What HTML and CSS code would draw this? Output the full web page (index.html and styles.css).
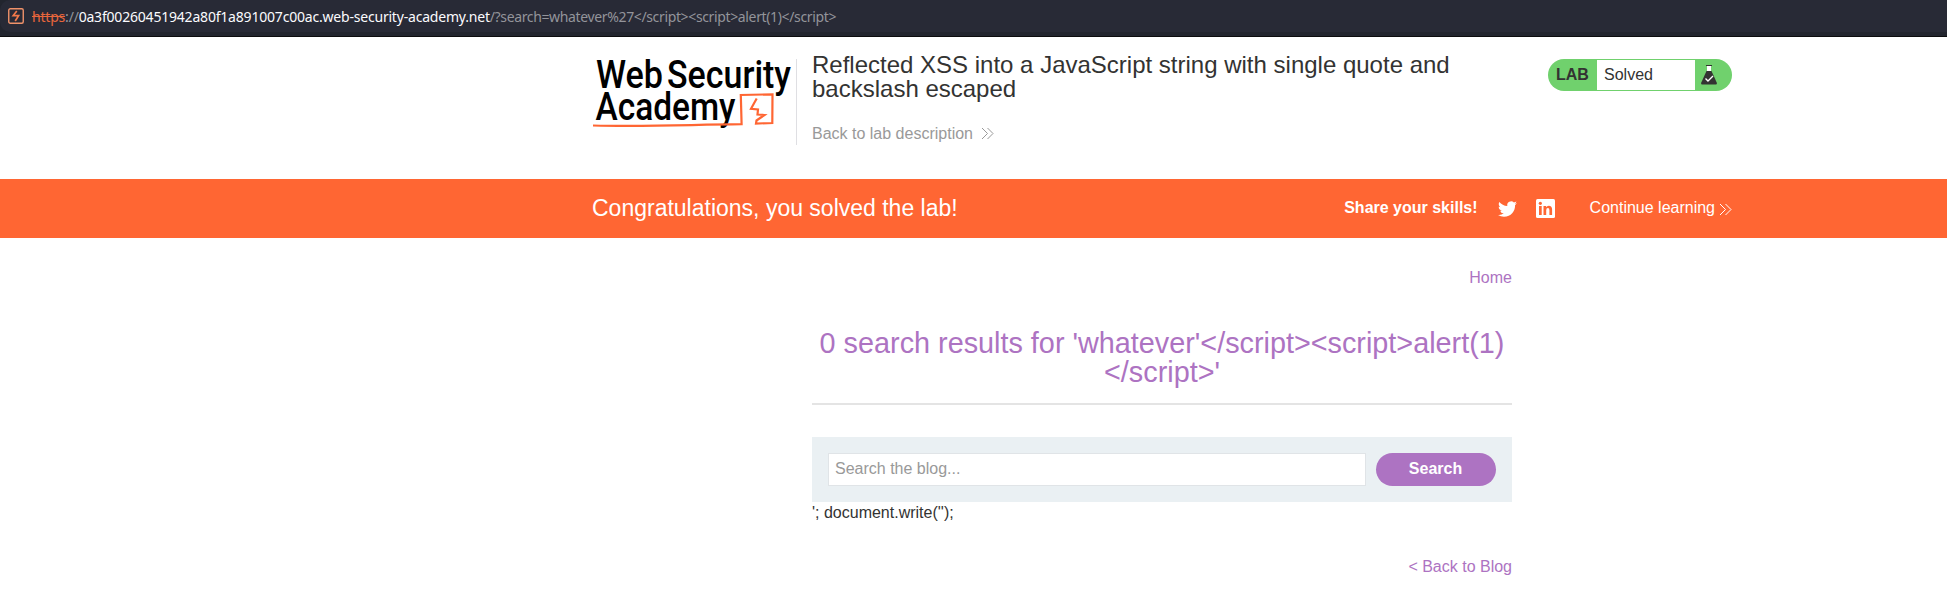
FILE: index.html
```html
<!DOCTYPE html>
<html lang="en">
<head>
<meta charset="utf-8">
<title>Reflected XSS into a JavaScript string</title>
<link rel="stylesheet" href="styles.css">
</head>
<body>
<div class="urlbar">
  <div class="urlfield">
    <svg class="urlicon" viewBox="0 0 16 16" width="16" height="16"><rect x=".75" y=".75" width="14.5" height="14.5" rx="1.5" fill="none" stroke="#f0926a" stroke-width="1.4"/><path d="M8.800 3 5.200 7.600h5.400L7.200 13" fill="none" stroke="#f0784a" stroke-width="1.700"/></svg>
    <span class="url"><span class="scheme">https</span><span class="dim">://</span><span class="host">0a3f00260451942a80f1a891007c00ac.web-security-academy.net</span><span class="dim query">/?search=whatever%27&lt;/script&gt;&lt;script&gt;alert(1)&lt;/script&gt;</span></span>
  </div>
</div>
<header class="header">
  <div class="container header-row">
    <div class="logo">
      <svg viewBox="0 0 204 86" width="204" height="86">
        <g class="logo-text">
          <text x="4" y="29" textLength="67" lengthAdjust="spacingAndGlyphs">Web</text>
          <text x="75" y="29" textLength="124" lengthAdjust="spacingAndGlyphs">Security</text>
          <text x="3.500" y="61" textLength="140" lengthAdjust="spacingAndGlyphs">Academy</text>
        </g>
        <path d="M1 66.500C50 68 90 66 149.600 65.200L148.800 36L180.500 35.300L180.300 64L164 64.500L164.500 61.500L172.500 56L165.500 55.500L166 50.500L159 49.800L164.700 39.500" fill="none" stroke="#ff6633" stroke-width="2.200"/>
      </svg>
    </div>
    <div class="title">
      <h2>Reflected XSS into a JavaScript string with single quote and backslash escaped</h2>
      <a class="lab-link">Back to lab description <svg class="chev" viewBox="0 0 13 13" width="13" height="13"><path d="M1 1 6.500 6.500 1 12M6.500 1 12 6.500 6.500 12"/></svg></a>
    </div>
    <div class="status">
      <span class="lab">LAB</span><span class="solved">Solved</span>
      <svg class="flask" viewBox="0 0 16 20" width="16" height="20"><path d="M5 .5h6" stroke="#333332" stroke-width="1"/><path d="M6 1h4v5H6z" fill="#fff"/><path d="M5.500 6h5l5.200 11.500q.8 2-1.400 2H1.700q-2.200 0-1.400-2z" fill="#333332"/><path d="m4.500 13.500 2.500 2.500 5-5" fill="none" stroke="#fff" stroke-width="1.400"/></svg>
    </div>
  </div>
</header>
<section class="banner">
  <div class="container banner-row">
    <h4>Congratulations, you solved the lab!</h4>
    <div class="share">
      <span class="skills">Share your skills!</span>
      <svg class="twitter" viewBox="0 0 24 24" width="19" height="20"><path fill="#fff" d="M23.950 4.570a10 10 0 0 1-2.820.77 4.960 4.960 0 0 0 2.160-2.720c-.95.55-2 .96-3.130 1.180a4.920 4.920 0 0 0-8.380 4.480C7.690 8.100 4.070 6.130 1.640 3.160a4.820 4.820 0 0 0-.67 2.480c0 1.710.87 3.210 2.190 4.100a4.900 4.900 0 0 1-2.230-.62v.06a4.920 4.920 0 0 0 3.950 4.830 5 5 0 0 1-2.210.08 4.940 4.940 0 0 0 4.600 3.420A9.870 9.870 0 0 1 0 19.540a13.990 13.990 0 0 0 7.550 2.210c9.050 0 14-7.500 14-13.980 0-.21 0-.42-.02-.63a9.940 9.940 0 0 0 2.420-2.570z"/></svg>
      <svg class="linkedin" viewBox="0 0 19 19" width="19" height="19"><rect width="19" height="19" rx="1.500" fill="#fff"/><g fill="#ff6633"><rect x="3" y="7" width="2.700" height="9"/><circle cx="4.350" cy="4.300" r="1.600"/><path d="M7.500 7h2.600v1.300q.9-1.500 2.700-1.500 3.300 0 3.300 3.800V16h-2.700v-4.700q0-2.200-1.500-2.200-1.700 0-1.700 2.200V16H7.500z"/></g></svg>
      <a class="continue">Continue learning <svg class="chev" viewBox="0 0 13 13" width="13" height="13"><path d="M1 1 6.500 6.500 1 12M6.500 1 12 6.500 6.500 12"/></svg></a>
    </div>
  </div>
</section>
<main class="content">
  <nav class="nav"><a>Home</a></nav>
  <h1>0 search results for 'whatever'&lt;/script&gt;&lt;script&gt;alert(1)<br>&lt;/script&gt;'</h1>
  <div class="rule"></div>
  <form class="search">
    <input type="text" placeholder="Search the blog...">
    <button type="button">Search</button>
  </form>
  <p class="leak">'; document.write('');</p>
  <div class="back"><a>&lt; Back to Blog</a></div>
</main>
</body>
</html>
```

FILE: styles.css
```css
* { box-sizing: border-box; }
body { margin: 0; background: #fff; color: #333332; font: 16px/18px "Liberation Sans", Arial, sans-serif; overflow: hidden; }
h1, h2, h4, p { margin: 0; font-weight: 400; }
svg { display: block; flex: none; overflow: visible; }
.urlbar { height: 37px; background: #22252e; border-bottom: 1px solid #0c0c0e; }
.urlfield { height: 32px; display: flex; align-items: center; padding-left: 8px; gap: 8px; background: #282a36; border-radius: 10px 0 0 10px; }
.url { font: 14px/20px "Noto Sans", sans-serif; letter-spacing: -0.2px; white-space: pre; padding-top: 1px; }
.scheme { color: #e8663c; text-decoration: line-through; }
.dim { color: #93949a; }
.query { letter-spacing: -0.36px; }
.host { color: #fbfbfe; }
.container { width: 1140px; margin-left: 592px; display: flex; }
.header { height: 142px; padding-top: 22px; }
.header-row { align-items: flex-start; }
.logo { width: 205px; height: 86px; border-right: 1px solid #dfdfe3; }
.logo-text { font: 500 38px Roboto, sans-serif; fill: #000; }
.title { width: 680px; padding-left: 15px; margin-top: -6px; }
.title h2 { font-size: 24px; line-height: 24px; }
.lab-link { display: flex; align-items: center; gap: 8px; margin-top: 24px; color: #999; }
.lab-link .chev { margin-top: -2px; }
.chev { fill: none; stroke: currentColor; stroke-width: 1; }
.status { margin-left: auto; width: 184px; height: 32px; border-radius: 16px; background: #70d16d; display: flex; align-items: center; }
.lab { width: 49px; padding-left: 8px; font-weight: 700; }
.solved { width: 98px; height: 30px; line-height: 29px; padding-left: 7px; background: #fff; }
.flask { margin-left: 6px; }
.banner { height: 59px; background: #ff6633; color: #fff; }
.banner-row { height: 59px; align-items: center; justify-content: space-between; }
.banner h4 { font-size: 23px; line-height: 26px; padding-bottom: 2px; }
.share { display: flex; align-items: center; }
.skills { font-weight: 700; padding-bottom: 2px; }
.twitter { margin-left: 20px; }
.linkedin { margin-left: 19px; }
.continue { display: flex; align-items: center; gap: 4px; margin-left: 35px; padding-bottom: 2px; }
.continue .chev { margin-top: 3px; }
.content { width: 700px; margin-left: 812px; }
.nav { padding-top: 31px; text-align: right; color: #ad73c2; }
h1 { margin-top: 42px; font-size: 28.8px; line-height: 29px; text-align: center; color: #ad73c2; }
.rule { height: 2px; margin-top: 16px; background: #e4e4e4; }
.search { display: flex; gap: 10px; height: 65px; margin-top: 32px; padding: 16px; background: #eaf0f3; }
.search input { flex: 1; height: 33px; border: 1px solid #e0e4e7; padding: 0 6px 2px; font: inherit; }
.search input::placeholder { color: #999; opacity: 1; }
.search button { width: 120px; height: 33px; border: 0; border-radius: 17px; padding: 0 1px 2px 0; background: #ad73c2; color: #fff; font: 700 16px/18px "Liberation Sans", Arial, sans-serif; }
.leak { margin-top: 2px; }
.back { margin-top: 36px; text-align: right; color: #ad73c2; }
```
